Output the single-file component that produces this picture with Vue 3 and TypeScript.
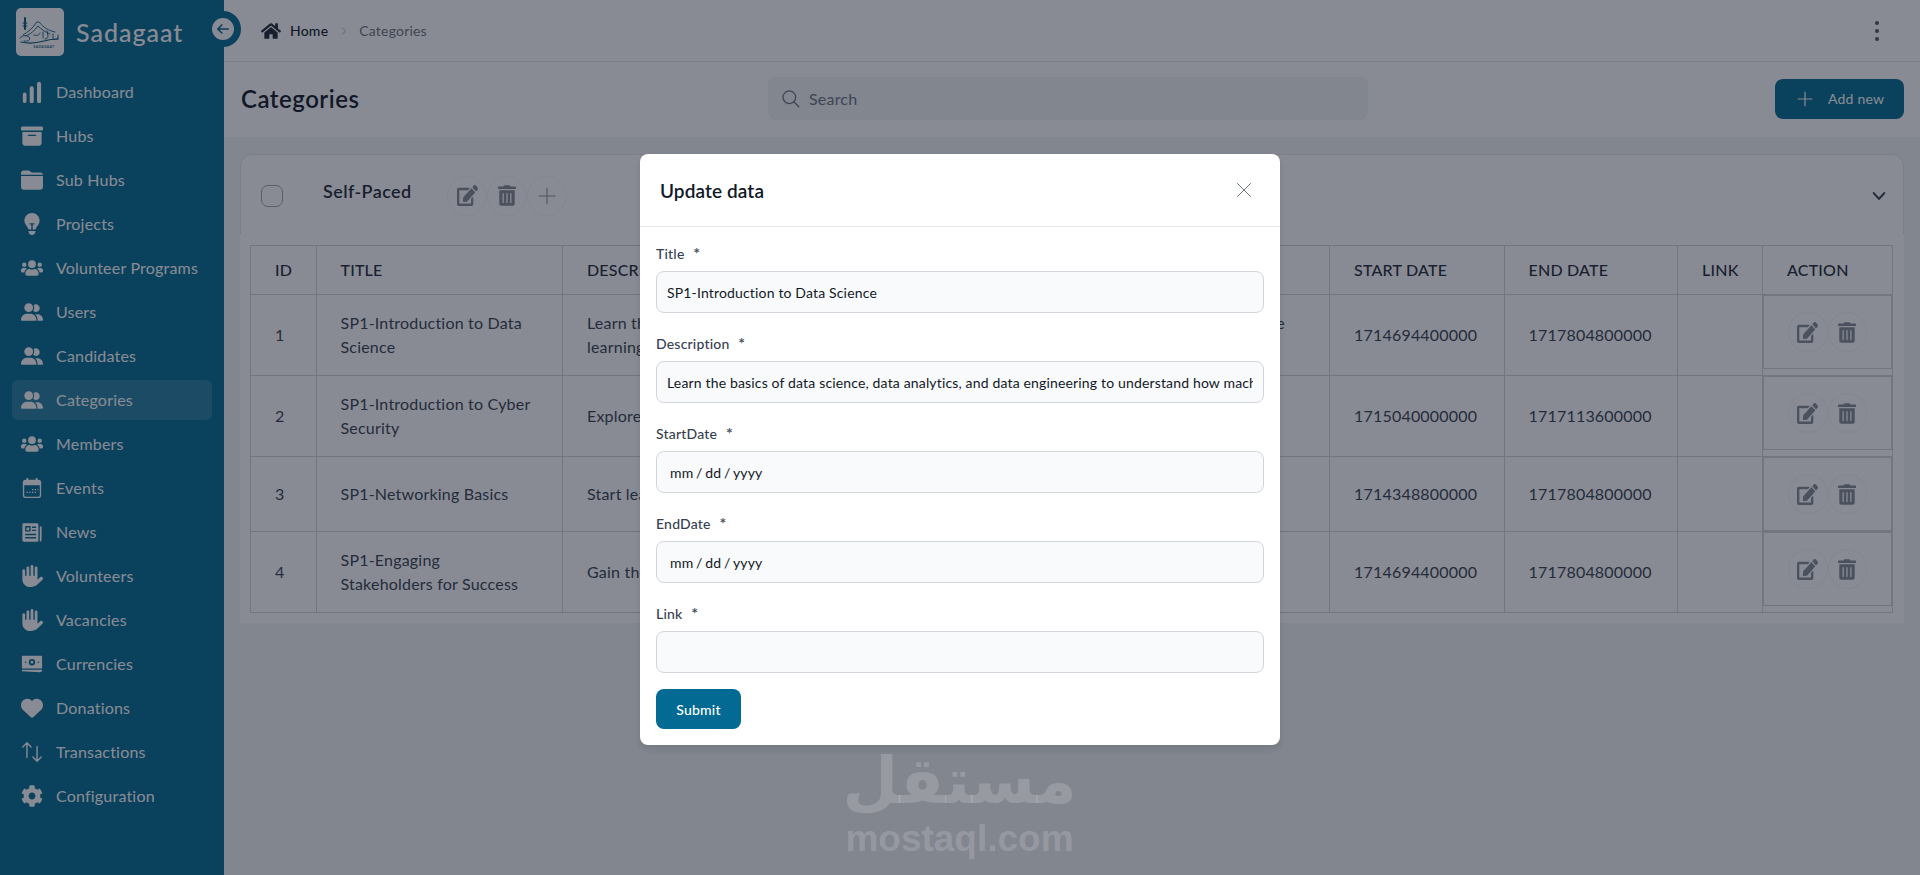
<script setup lang="ts">
interface Icon {
  box: string
  d: string
  line?: boolean
}

const icons: Record<string, Icon> = {
  chart: { box: '0 0 24 24', d: 'M2 14.500a2 2 0 0 1 4 0V22a2 2 0 0 1-4 0zM9.500 8a2.200 2.200 0 0 1 4.400 0v14a2.200 2.200 0 0 1-4.400 0zM17.500 3a2.200 2.200 0 0 1 4.400 0v19a2.200 2.200 0 0 1-4.400 0z' },
  box: { box: '0 0 512 512', d: 'M32 32H480c17.700 0 32 14.300 32 32V96c0 17.700-14.300 32-32 32H32C14.300 128 0 113.700 0 96V64C0 46.300 14.300 32 32 32zm0 128H480V416c0 35.300-28.700 64-64 64H96c-35.300 0-64-28.700-64-64V160zm128 80c0 8.800 7.200 16 16 16H336c8.800 0 16-7.200 16-16s-7.200-16-16-16H176c-8.800 0-16 7.200-16 16z' },
  folder: { box: '0 0 512 512', d: 'M0 96C0 60.700 28.700 32 64 32H170c16 0 30 6 42 18l34 34H448c30 0 56 20 62 48H0zM0 160H512V416c0 35.300-28.700 64-64 64H64c-35.300 0-64-28.700-64-64z' },
  bulb: { box: '0 0 384 512', d: 'M272 384c9.600-31.900 29.500-59.100 49.200-86.200c5.200-7.100 10.400-14.200 15.400-21.400c19.800-28.500 31.400-63 31.400-100.300C368 78.800 289.200 0 192 0S16 78.800 16 176c0 37.300 11.600 71.900 31.400 100.300c5 7.200 10.200 14.300 15.400 21.400c19.800 27.100 39.700 54.400 49.200 86.200H176V270h-40v-30h112v30h-40V384zM192 512c44.200 0 80-35.800 80-80V416H112v16c0 44.200 35.800 80 80 80z' },
  group: { box: '0 0 640 512', d: 'M96 128a128 128 0 1 1 256 0A128 128 0 1 1 96 128zM0 482.300C0 383.800 79.800 304 178.300 304h91.400C368.200 304 448 383.800 448 482.300c0 16.400-13.300 29.700-29.700 29.700H29.700C13.300 512 0 498.700 0 482.300zM609.300 512H471.400c5.400-9.400 8.600-20.300 8.600-32v-8c0-60.700-27.100-115.200-69.800-151.800c2.400-.1 4.700-.2 7.100-.2h61.400C567.800 320 640 392.200 640 481.300c0 17-13.800 30.700-30.700 30.700zM432 256c-31 0-59-12.600-79.300-32.900C372.400 196.500 384 163.600 384 128c0-26.800-6.600-52.100-18.300-74.300C384.300 40.100 407.200 32 432 32c61.900 0 112 50.100 112 112s-50.100 112-112 112z' },
  users: { box: '0 0 640 512', d: 'M96 224a64 64 0 1 0 0-128 64 64 0 0 0 0 128zm448 0a64 64 0 1 0 0-128 64 64 0 0 0 0 128zm32 32h-64c-17.600 0-33.500 7.100-45.100 18.600 40.300 22.100 68.900 62 75.100 109.400h66c17.700 0 32-14.300 32-32v-32c0-35.300-28.700-64-64-64zm-256 0a112 112 0 1 0 0-224 112 112 0 0 0 0 224zm76.800 32h-8.300c-20.800 10-43.900 16-68.500 16s-47.600-6-68.500-16h-8.300C179.600 288 128 339.600 128 403.200V432c0 26.500 21.500 48 48 48h288c26.500 0 48-21.500 48-48v-28.800c0-63.600-51.600-115.200-115.200-115.200zM173.100 274.600C161.500 263.100 145.600 256 128 256H64c-35.300 0-64 28.700-64 64v32c0 17.700 14.300 32 32 32h65.900c6.300-47.400 34.900-87.300 75.200-109.400z' },
  calendar: { box: '0 0 24 24', d: 'M6 1h2v2h8V1h2v2h1a3 3 0 0 1 3 3v14a3 3 0 0 1-3 3H5a3 3 0 0 1-3-3V6a3 3 0 0 1 3-3h1zM3.500 9v11A1.500 1.500 0 0 0 5 21.500h14a1.500 1.500 0 0 0 1.500-1.500V9zM12 13h1.500v1.500H12zM15 13h1.500v1.500H15zM18 13h1v1.500h-1zM9 16h1.500v1.500H9zM12 16h1.500v1.500H12zM15 16h1.500v1.500H15zM6 16h1.500v1.500H6z' },
  news: { box: '0 0 24 24', d: 'M3 2.500h14.500a1.500 1.500 0 0 1 1.500 1.500v17a1.500 1.500 0 0 1-1.500 1.500H3A1.500 1.500 0 0 1 1.500 21V4A1.500 1.500 0 0 1 3 2.500zM4.500 5.500v6h6v-6zM6 7h3v3H6zM12 6v1.500h4.500V6zM12 9.500V11h4.500V9.500zM4.500 14v1.500h12V14zM4.500 17.500V19h12v-1.500zM20.500 6H22.500v14.500a2 2 0 0 1-2 2z' },
  hand: { box: '0 0 512 512', d: 'M288 32c0-17.700-14.300-32-32-32s-32 14.300-32 32V240c0 8.800-7.200 16-16 16s-16-7.200-16-16V64c0-17.700-14.300-32-32-32s-32 14.300-32 32V336c0 1.500 0 3.100 .1 4.600L67.600 283c-16-15.200-41.300-14.600-56.600 1.400s-14.600 41.300 1.400 56.600L124.800 448c43.100 41.100 100.400 64 160 64H304c97.200 0 176-78.800 176-176V128c0-17.700-14.300-32-32-32s-32 14.300-32 32V240c0 8.800-7.200 16-16 16s-16-7.200-16-16V64c0-17.700-14.300-32-32-32s-32 14.300-32 32V240c0 8.800-7.200 16-16 16s-16-7.200-16-16V32z' },
  money: { box: '0 0 24 24', d: 'M2 3h20a1 1 0 0 1 1 1v12a1 1 0 0 1-1 1H2a1 1 0 0 1-1-1V4a1 1 0 0 1 1-1zM12 6.500a3.500 3.500 0 1 0 0 7 3.500 3.500 0 0 0 0-7zM12 8.500a1.500 1.500 0 1 1 0 3 1.500 1.500 0 0 1 0-3zM5 9.300a.8.800 0 1 0 0 1.600.8.800 0 0 0 0-1.600zM19 9.300a.8.800 0 1 0 0 1.600.8.800 0 0 0 0-1.600zM1 18.300h22v1.700l-2.500 1-19.500-1.200z' },
  heart: { box: '0 0 512 512', d: 'M47.600 300.400L228.300 469.100c7.500 7 17.400 10.900 27.700 10.900s20.200-3.900 27.700-10.900L464.400 300.400c30.400-28.300 47.600-68 47.600-109.500v-5.800c0-69.900-50.500-129.500-119.400-141C347 36.500 300.600 51.400 268 84L256 96 244 84c-32.600-32.600-79-47.500-124.600-39.900C50.500 55.600 0 115.200 0 185.100v5.800c0 41.500 17.200 81.200 47.600 109.500z' },
  arrows: { box: '0 0 24 24', d: 'M6.500 18V2M2 6.500 6.500 2 11 6.500M17.500 6v16M13 17.500l4.500 4.500 4.500-4.500', line: true },
  gear: { box: '0 0 512 512', d: 'M487.400 315.700l-42.600-24.600c4.300-23.200 4.300-47 0-70.200l42.600-24.600c4.900-2.800 7.100-8.600 5.500-14-11.100-35.600-30-67.800-54.700-94.600-3.800-4.100-10-5.100-14.800-2.300L380.800 110c-17.900-15.400-38.500-27.300-60.800-35.100V25.800c0-5.600-3.900-10.500-9.400-11.700-36.700-8.200-74.300-7.800-109.200 0-5.500 1.200-9.400 6.100-9.400 11.700V75c-22.200 7.900-42.800 19.800-60.800 35.100L88.700 85.500c-4.900-2.800-11-1.900-14.800 2.300-24.700 26.700-43.600 58.900-54.700 94.600-1.700 5.400.6 11.200 5.500 14L67.300 221c-4.300 23.200-4.300 47 0 70.200l-42.600 24.600c-4.900 2.800-7.100 8.600-5.500 14 11.100 35.600 30 67.800 54.700 94.600 3.800 4.100 10 5.100 14.800 2.300l42.600-24.600c17.900 15.400 38.500 27.300 60.800 35.100v49.200c0 5.600 3.900 10.500 9.400 11.700 36.700 8.200 74.300 7.800 109.200 0 5.500-1.200 9.400-6.100 9.400-11.700v-49.200c22.200-7.900 42.800-19.800 60.800-35.100l42.600 24.600c4.900 2.800 11 1.900 14.800-2.300 24.700-26.700 43.600-58.900 54.700-94.600 1.500-5.500-.7-11.300-5.600-14.100zM256 336c-44.100 0-80-35.900-80-80s35.900-80 80-80 80 35.900 80 80-35.900 80-80 80z' },
}

const edit = 'M402.600 83.200l90.200 90.200c3.800 3.800 3.800 10 0 13.800L274.400 405.600l-92.800 10.300c-12.400 1.400-22.900-9.100-21.500-21.500l10.300-92.800L388.800 83.200c3.800-3.800 10-3.800 13.800 0zm162-22.900l-48.800-48.800c-15.200-15.200-39.900-15.200-55.200 0l-35.400 35.400c-3.800 3.800-3.800 10 0 13.800l90.200 90.200c3.800 3.800 10 3.800 13.800 0l35.400-35.400c15.200-15.300 15.200-40 0-55.200zM384 346.200V448H64V128h229.800c3.200 0 6.200-1.300 8.500-3.500l40-40c7.600-7.600 2.200-20.500-8.500-20.500H48C21.500 64 0 85.500 0 112v352c0 26.500 21.500 48 48 48h352c26.500 0 48-21.500 48-48V306.200c0-10.700-12.900-16-20.500-8.500l-40 40c-2.200 2.300-3.500 5.300-3.500 8.500z'
const trash = 'M32 464a48 48 0 0 0 48 48h288a48 48 0 0 0 48-48V128H32zm272-256a16 16 0 0 1 32 0v224a16 16 0 0 1-32 0zm-96 0a16 16 0 0 1 32 0v224a16 16 0 0 1-32 0zm-96 0a16 16 0 0 1 32 0v224a16 16 0 0 1-32 0zM432 32H312l-9.400-18.700A24 24 0 0 0 281.100 0H166.800a23.720 23.720 0 0 0-21.400 13.300L136 32H16A16 16 0 0 0 0 48v32a16 16 0 0 0 16 16h416a16 16 0 0 0 16-16V48a16 16 0 0 0-16-16z'
const home = 'M280.370 148.260L96 300.110V464a16 16 0 0 0 16 16l112.060-.29a16 16 0 0 0 15.920-16V368a16 16 0 0 1 16-16h64a16 16 0 0 1 16 16v95.640a16 16 0 0 0 16 16.050L464 480a16 16 0 0 0 16-16V300L295.670 148.260a12.190 12.190 0 0 0-15.300 0zM571.600 251.470L488 182.560V44.050a12 12 0 0 0-12-12h-56a12 12 0 0 0-12 12v72.610L318.470 43a48 48 0 0 0-61 0L4.340 251.470a12 12 0 0 0-1.600 16.900l25.500 31A12 12 0 0 0 45.150 301l235.220-193.740a12.190 12.190 0 0 1 15.300 0L530.900 301a12 12 0 0 0 16.900-1.600l25.500-31a12 12 0 0 0-1.700-16.930z'

const nav = [
  { label: 'Dashboard', icon: 'chart' },
  { label: 'Hubs', icon: 'box' },
  { label: 'Sub Hubs', icon: 'folder' },
  { label: 'Projects', icon: 'bulb' },
  { label: 'Volunteer Programs', icon: 'users' },
  { label: 'Users', icon: 'group' },
  { label: 'Candidates', icon: 'group' },
  { label: 'Categories', icon: 'group', active: true },
  { label: 'Members', icon: 'users' },
  { label: 'Events', icon: 'calendar' },
  { label: 'News', icon: 'news' },
  { label: 'Volunteers', icon: 'hand' },
  { label: 'Vacancies', icon: 'hand' },
  { label: 'Currencies', icon: 'money' },
  { label: 'Donations', icon: 'heart' },
  { label: 'Transactions', icon: 'arrows' },
  { label: 'Configuration', icon: 'gear' },
]

const rows = [
  { id: 1, title: 'SP1-Introduction to Data Science', desc: 'Learn the basics of data science, data analytics, and data engineering to understand how machine learning models are built.', start: '1714694400000', end: '1717804800000' },
  { id: 2, title: 'SP1-Introduction to Cyber Security', desc: 'Explore the foundations of keeping systems, networks and personal data safe from attacks.', start: '1715040000000', end: '1717113600000' },
  { id: 3, title: 'SP1-Networking Basics', desc: 'Start learning how computers talk to each other across networks.', start: '1714348800000', end: '1717804800000' },
  { id: 4, title: 'SP1-Engaging Stakeholders\u00a0for\u00a0Success', desc: 'Gain the skills to communicate with and involve stakeholders.', start: '1714694400000', end: '1717804800000' },
]

const fields = [
  { label: 'Title', value: 'SP1-Introduction to Data Science' },
  { label: 'Description', value: 'Learn the basics of data science, data analytics, and data engineering to understand how machine learning models are built.' },
  { label: 'StartDate', value: 'mm / dd / yyyy', date: true },
  { label: 'EndDate', value: 'mm / dd / yyyy', date: true },
  { label: 'Link', value: '' },
]
</script>

<template>
  <div class="page">
    <aside class="sidebar">
      <div class="brand">
        <div class="logo">
          <svg viewBox="0 0 48 48" width="48" height="48">
            <g fill="none" stroke="#0b5878" stroke-width=".9" stroke-linecap="round">
              <path d="M7 27C12 24 17 20 20 15c1-1.500 3-1.500 4 0 3 4 9 8 15 9" />
              <path d="M10 28c5-2 9-6 12-10 3 3 7 6 12 8" />
              <path d="M9 10v11" stroke-width="2" />
              <path d="M7 15h4M7 18h4" stroke-width="1.200" />
              <path d="M4 30c3-3 7-3 9-1 2 3-1 5-5 4" />
              <path d="M5 34c8 2 16 1 23-1 5-1.500 10-2 14-2" stroke-width="1.100" />
              <path d="M18 27c4 1 5 0 6-2M27 24v6M31 23l1 5c0 2-1 3-3 3M37 26v4c0 2 3 2 5 0M42 27v4" />
            </g>
            <text x="28" y="39.500" class="logo-text" text-anchor="middle">SADAGAAT</text>
          </svg>
        </div>
        <span class="brand-name">Sadagaat</span>
      </div>
      <button class="collapse">
        <svg viewBox="0 0 24 24" width="14" height="14" fill="none" stroke="#07628a" stroke-width="2.600" stroke-linecap="round" stroke-linejoin="round"><path d="M21 12H4M10 5l-7 7 7 7" /></svg>
      </button>
      <nav class="menu">
        <a v-for="item in nav" :key="item.label" class="menu-item" :class="{ active: item.active }">
          <svg class="menu-icon" :class="{ flip: item.icon === 'hand' }" :viewBox="icons[item.icon].box">
            <path v-if="icons[item.icon].line" :d="icons[item.icon].d" fill="none" stroke="currentColor" stroke-width="1.500" stroke-linecap="round" stroke-linejoin="round" />
            <path v-else :d="icons[item.icon].d" fill="currentColor" fill-rule="evenodd" />
          </svg>
          <span>{{ item.label }}</span>
        </a>
      </nav>
    </aside>

    <main class="main">
      <header class="topbar">
        <svg class="home" viewBox="0 0 576 512"><path :d="home" fill="currentColor" /></svg>
        <span class="crumb">Home</span>
        <svg class="crumb-sep" viewBox="0 0 24 24" fill="none" stroke="currentColor" stroke-width="2"><path d="m8 4 8 8-8 8" /></svg>
        <span class="crumb muted">Categories</span>
        <div class="dots"><i></i><i></i><i></i></div>
      </header>

      <section class="titlebar">
        <h1>Categories</h1>
        <div class="search">
          <svg viewBox="0 0 24 24" width="19" height="19" fill="none" stroke="currentColor" stroke-width="1.600" stroke-linecap="round"><circle cx="10.500" cy="10.500" r="8" /><path d="m16.500 16.500 6 6" /></svg>
          <span>Search</span>
        </div>
        <button class="add">
          <svg viewBox="0 0 24 24" width="16" height="16" fill="none" stroke="currentColor" stroke-width="1.800"><path d="M12 1v22M1 12h22" /></svg>
          <span>Add new</span>
        </button>
      </section>

      <section class="content">
        <div class="card">
          <div class="card-head">
            <span class="check"></span>
            <span class="card-title">Self-Paced</span>
            <div class="tools">
              <span class="round"><svg viewBox="0 0 576 512" preserveAspectRatio="none" width="21" height="21"><path :d="edit" fill="currentColor" /></svg></span>
              <span class="round"><svg viewBox="0 0 448 512" width="18" height="21"><path :d="trash" fill="currentColor" /></svg></span>
              <span class="round"><svg viewBox="0 0 24 24" width="18" height="18" fill="none" stroke="currentColor" stroke-width="1.400"><path d="M12 1v22M1 12h22" /></svg></span>
            </div>
            <svg class="chevron" viewBox="0 0 24 24" width="14" height="14" fill="none" stroke="currentColor" stroke-width="3.600" stroke-linecap="round" stroke-linejoin="round"><path d="m3 7 9 10 9-10" /></svg>
          </div>
          <div class="card-body">
            <table>
              <colgroup>
                <col class="c-id" />
                <col class="c-title" />
                <col class="c-desc" />
                <col class="c-date" />
                <col class="c-date2" />
                <col class="c-link" />
                <col />
              </colgroup>
              <thead>
                <tr>
                  <th>ID</th>
                  <th>Title</th>
                  <th>Description</th>
                  <th>Start date</th>
                  <th>End date</th>
                  <th>Link</th>
                  <th>Action</th>
                </tr>
              </thead>
              <tbody>
                <tr v-for="row in rows" :key="row.id">
                  <td>{{ row.id }}</td>
                  <td>{{ row.title }}</td>
                  <td>{{ row.desc }}</td>
                  <td>{{ row.start }}</td>
                  <td>{{ row.end }}</td>
                  <td></td>
                  <td class="action-cell">
                    <div class="actions">
                      <span class="round"><svg viewBox="0 0 576 512" preserveAspectRatio="none" width="21" height="21"><path :d="edit" fill="currentColor" /></svg></span>
                      <span class="round"><svg viewBox="0 0 448 512" width="18" height="21"><path :d="trash" fill="currentColor" /></svg></span>
                    </div>
                  </td>
                </tr>
              </tbody>
            </table>
          </div>
        </div>
      </section>
    </main>

    <div class="backdrop"></div>

    <div class="watermark">
      <span class="wm-ar">مستقل</span>
      <span class="wm-en">mostaql.com</span>
    </div>

    <div class="modal">
      <div class="modal-head">
        <h3>Update data</h3>
        <svg viewBox="0 0 24 24" width="18" height="18" fill="none" stroke="#6b7280" stroke-width="1.300"><path d="m3 3 18 18M21 3 3 21" /></svg>
      </div>
      <form class="modal-body" @submit.prevent>
        <div v-for="field in fields" :key="field.label" class="field">
          <label>{{ field.label }} <b>*</b></label>
          <input type="text" :value="field.value" :class="{ date: field.date }" />
        </div>
        <button type="submit" class="submit">Submit</button>
      </form>
    </div>
  </div>
</template>

<style>
html, body {
  margin: 0;
  padding: 0;
}
</style>

<style scoped>
* {
  box-sizing: border-box;
}

.page {
  position: relative;
  display: flex;
  height: 875px;
  overflow: hidden;
  font-family: Lato, "Noto Sans", sans-serif;
  letter-spacing: .2px;
  background: #f3f4f6;
  color: #1f2937;
}

.sidebar {
  position: relative;
  flex: 0 0 224px;
  background: #036a93;
  color: #fff;
}

.brand {
  display: flex;
  align-items: center;
  height: 64px;
  padding: 0 16px;
  gap: 12px;
}

.logo {
  width: 48px;
  height: 48px;
  border-radius: 5px;
  background: #fff;
  overflow: hidden;
}

.logo-text {
  font-size: 3.200px;
  font-weight: 700;
  letter-spacing: .5px;
  fill: #0b5878;
}

.brand-name {
  font-size: 25px;
  font-weight: 500;
  letter-spacing: 1px;
}

.collapse {
  position: absolute;
  left: 205px;
  top: 11px;
  width: 36px;
  height: 36px;
  padding: 0;
  border: 7px solid #036a93;
  border-radius: 50%;
  background: #fff;
  display: flex;
  align-items: center;
  justify-content: center;
}

.menu {
  display: flex;
  flex-direction: column;
  gap: 4px;
  padding: 8px 12px;
}

.menu-item {
  display: flex;
  align-items: center;
  gap: 13px;
  height: 40px;
  padding-left: 9px;
  border-radius: 6px;
  font-size: 16px;
}

.menu-item span {
  margin-top: -2px;
}

.menu-item.active {
  background: rgba(255, 255, 255, .14);
}

.menu-icon {
  width: 22px;
  height: 22px;
  flex: none;
}

.flip {
  transform: scaleX(-1);
}

.main {
  flex: 1;
  min-width: 0;
  display: flex;
  flex-direction: column;
}

.topbar {
  display: flex;
  align-items: center;
  height: 62px;
  padding: 0 37px;
  background: #fff;
  border-bottom: 1px solid #e5e7eb;
}

.home {
  width: 20px;
  height: 18px;
  color: #1f2937;
  margin-right: 9px;
}

.crumb {
  font-size: 14px;
  font-weight: 500;
  color: #111827;
}

.crumb.muted {
  color: #6b7280;
  font-weight: 400;
}

.crumb-sep {
  width: 10px;
  height: 10px;
  margin: 0 10px 0 11px;
  color: #9ca3af;
}

.dots {
  margin-left: auto;
  margin-right: 4px;
  display: flex;
  flex-direction: column;
  gap: 4px;
}

.dots i {
  width: 4px;
  height: 4px;
  border-radius: 50%;
  background: #4b5563;
}

.titlebar {
  display: grid;
  grid-template-columns: 527px 600px 1fr;
  align-items: center;
  height: 75px;
  padding: 0 16px 2px 17px;
  background: #fff;
}

.titlebar h1 {
  margin: 0;
  font-size: 24px;
  font-weight: 600;
  letter-spacing: .5px;
  color: #111827;
}

.search {
  display: flex;
  align-items: center;
  gap: 9px;
  height: 43px;
  padding-left: 13px;
  border-radius: 8px;
  background: #f3f4f6;
  color: #6b7280;
  font-size: 16px;
}

.add {
  justify-self: end;
  display: flex;
  align-items: center;
  gap: 15px;
  width: 129px;
  height: 40px;
  padding: 0 0 0 22px;
  border: 0;
  border-radius: 8px;
  background: #036a93;
  color: #fff;
  font: inherit;
  font-size: 14px;
  letter-spacing: .2px;
}

.content {
  flex: 1;
  padding: 17px 16px 0;
}

.card {
  background: #fff;
  border-radius: 12px 12px 0 0;
  padding-bottom: 10px;
}

.card-head {
  display: flex;
  align-items: center;
  height: 80px;
  padding: 0 20px;
  border: 1px solid #e5e7eb;
  border-bottom: 0;
  border-radius: 12px 12px 0 0;
}

.check {
  flex: none;
  width: 22px;
  height: 22px;
  margin-top: 2px;
  border: 1px solid #9ca3af;
  border-radius: 7px;
  background: #fff;
}

.card-title {
  flex: none;
  width: 124px;
  margin: -8px 0 0 40px;
  font-size: 18px;
  font-weight: 600;
  letter-spacing: .4px;
  color: #1f2937;
}

.tools {
  display: flex;
  margin-top: 2px;
}

.round {
  display: flex;
  align-items: center;
  justify-content: center;
  width: 40px;
  height: 40px;
  border: 1px solid #f3f4f6;
  border-radius: 50%;
  color: #848b97;
}

.chevron {
  margin-left: auto;
  margin-top: 2px;
  margin-right: -3px;
  color: #374151;
}

.card-body {
  padding: 11px 10px 0;
}

table {
  width: 1643px;
  table-layout: fixed;
  border-collapse: collapse;
  font-size: 16px;
  color: #374151;
}

.c-id { width: 65.500px; }
.c-title { width: 246.500px; }
.c-desc { width: 767px; }
.c-date { width: 174.500px; }
.c-date2 { width: 173.500px; }
.c-link { width: 85px; }

th, td {
  border: 1px solid #d1d5db;
  padding: 12px 24px;
  text-align: left;
  font-weight: 400;
  line-height: 24px;
}

td {
  padding: 16px 24px;
}

th {
  text-transform: uppercase;
  color: #1f2937;
  font-weight: 500;
}

.action-cell {
  padding: 0;
  vertical-align: top;
}

.actions {
  display: flex;
  padding: 16px 24px;
  border: 1px solid #d1d5db;
}

.backdrop {
  position: absolute;
  inset: 0;
  background: rgba(17, 24, 39, .5);
}

.watermark {
  position: absolute;
  left: 846px;
  top: 742px;
  width: 227px;
  display: flex;
  flex-direction: column;
  align-items: center;
  color: rgba(255, 255, 255, .17);
  font-family: "Liberation Sans", sans-serif;
  font-weight: 700;
  letter-spacing: 0;
}

.wm-ar {
  font-family: "DejaVu Sans", sans-serif;
  font-size: 64px;
  line-height: 78px;
}

.wm-en {
  font-size: 37px;
  line-height: 38px;
  margin-top: 0;
}

.modal {
  position: absolute;
  left: 640px;
  top: 154px;
  width: 640px;
  height: 591px;
  border-radius: 8px;
  background: #fff;
  box-shadow: 0 4px 6px rgba(0, 0, 0, .1);
}

.modal-head {
  display: flex;
  align-items: center;
  justify-content: space-between;
  height: 73px;
  padding: 0 27px 0 20px;
  border-bottom: 1px solid #e5e7eb;
}

.modal-head h3 {
  margin: 0;
  font-size: 19px;
  font-weight: 600;
  letter-spacing: .1px;
  color: #111827;
}

.modal-body {
  display: flex;
  flex-direction: column;
  align-items: flex-start;
  padding: 16px;
}

.field {
  width: 100%;
  margin-bottom: 20px;
}

.field:nth-last-child(2) {
  margin-bottom: 16px;
}

.field label {
  display: block;
  height: 20px;
  margin-bottom: 8px;
  font-size: 14px;
  line-height: 20px;
  font-weight: 500;
  color: #374151;
}

.field label b {
  margin-left: 5px;
  font-size: 16px;
  line-height: 20px;
  font-weight: 700;
  color: #4b5563;
}

.field input {
  display: block;
  width: 100%;
  height: 42px;
  padding: 0 10px;
  border: 1px solid #d1d5db;
  border-radius: 8px;
  background: #f9fafb;
  font: inherit;
  font-size: 14px;
  letter-spacing: .16px;
  color: #111827;
  outline: none;
}

.field input.date {
  padding-left: 13px;
  word-spacing: -1px;
}

.submit {
  width: 85px;
  height: 40px;
  border: 0;
  border-radius: 8px;
  background: #036a93;
  color: #fff;
  font: inherit;
  font-size: 14px;
  letter-spacing: .2px;
  font-weight: 500;
}
</style>
